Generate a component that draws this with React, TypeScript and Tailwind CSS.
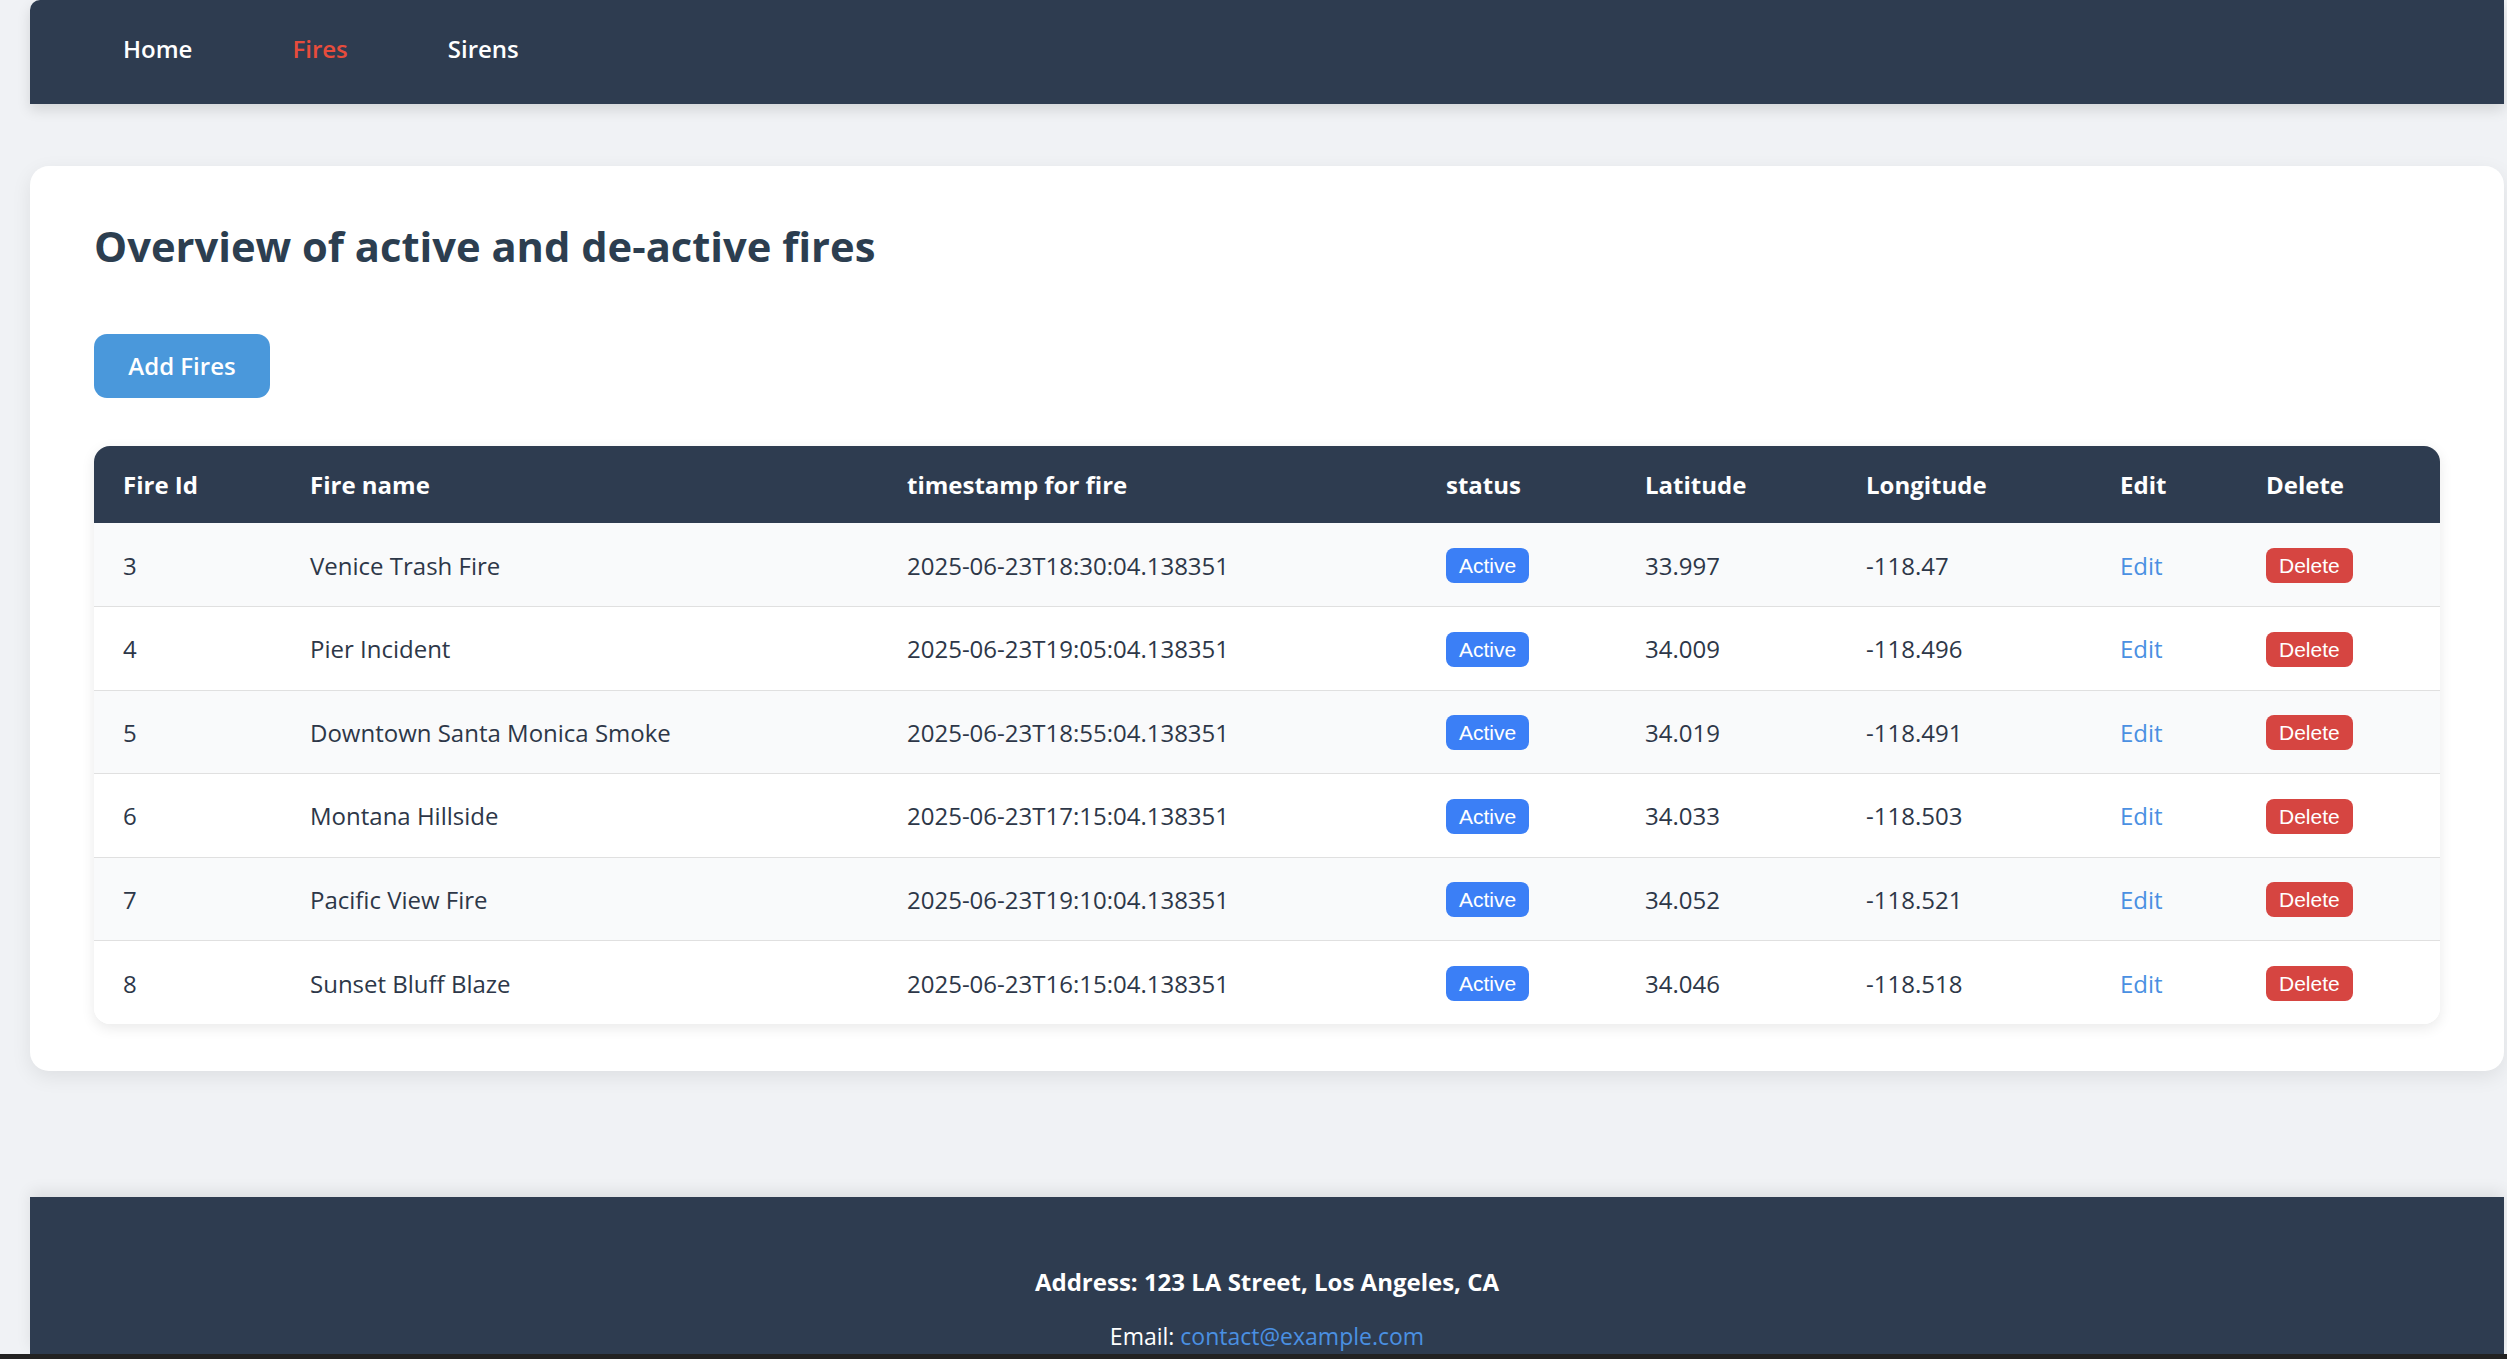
const fires = [
  { id: 3, name: 'Venice Trash Fire', ts: '2025-06-23T18:30:04.138351', lat: '33.997', lng: '-118.47' },
  { id: 4, name: 'Pier Incident', ts: '2025-06-23T19:05:04.138351', lat: '34.009', lng: '-118.496' },
  { id: 5, name: 'Downtown Santa Monica Smoke', ts: '2025-06-23T18:55:04.138351', lat: '34.019', lng: '-118.491' },
  { id: 6, name: 'Montana Hillside', ts: '2025-06-23T17:15:04.138351', lat: '34.033', lng: '-118.503' },
  { id: 7, name: 'Pacific View Fire', ts: '2025-06-23T19:10:04.138351', lat: '34.052', lng: '-118.521' },
  { id: 8, name: 'Sunset Bluff Blaze', ts: '2025-06-23T16:15:04.138351', lat: '34.046', lng: '-118.518' },
];

const headers = [
  { label: 'Fire Id', w: 'w-[187px]' },
  { label: 'Fire name', w: 'w-[597px]' },
  { label: 'timestamp for fire', w: 'w-[539px]' },
  { label: 'status', w: 'w-[199px]' },
  { label: 'Latitude', w: 'w-[221px]' },
  { label: 'Longitude', w: 'w-[254px]' },
  { label: 'Edit', w: 'w-[146px]' },
  { label: 'Delete', w: 'w-[205px]' },
];

function NavBar() {
  return (
    <nav className="h-[104px] bg-[#2e3c50] rounded-tl-[10px] shadow-[0_6px_14px_rgba(0,0,0,0.12)] flex items-center pl-[93px] pb-[6px] gap-[100px] text-[24px] font-semibold">
      <a className="text-white">Home</a>
      <a className="text-[#e74c3c]">Fires</a>
      <a className="text-white">Sirens</a>
    </nav>
  );
}

function FiresTable() {
  return (
    <div className="rounded-2xl shadow-[0_4px_14px_rgba(0,0,0,0.09)] overflow-hidden bg-white">
      <table className="w-full table-fixed border-collapse text-left">
        <thead>
          <tr className="bg-[#2e3c50] text-white h-[77px]">
            {headers.map((h) => (
              <th key={h.label} className={`${h.w} pl-[29px] font-bold text-[24px]`}>
                {h.label}
              </th>
            ))}
          </tr>
        </thead>
        <tbody>
          {fires.map((f, i) => (
            <tr
              key={f.id}
              className={`h-[83.5px] text-[24px] text-[#2d3748] ${i % 2 === 0 ? 'bg-[#f9fafb]' : 'bg-white'} ${i < fires.length - 1 ? 'border-b border-[#e0e0e0]' : ''}`}
            >
              <td className="pl-[29px] pt-[2px]">{f.id}</td>
              <td className="pl-[29px] pt-[2px]">{f.name}</td>
              <td className="pl-[29px] pt-[2px]">{f.ts}</td>
              <td className="pl-[29px]">
                <span className="inline-flex items-center h-[35px] px-[13px] rounded-[8px] bg-[#3b7ff6] text-white text-[21px] font-['Liberation_Sans',Arial,sans-serif]">
                  Active
                </span>
              </td>
              <td className="pl-[29px] pt-[2px]">{f.lat}</td>
              <td className="pl-[29px] pt-[2px]">{f.lng}</td>
              <td className="pl-[29px] pt-[2px]">
                <a className="text-[#4a90e2]">Edit</a>
              </td>
              <td className="pl-[29px]">
                <button className="inline-flex items-center h-[35px] px-[13px] rounded-[8px] bg-[#d64541] text-white text-[21px] font-['Liberation_Sans',Arial,sans-serif]">
                  Delete
                </button>
              </td>
            </tr>
          ))}
        </tbody>
      </table>
    </div>
  );
}

export default function App() {
  return (
    <div className="min-h-[1359px] bg-[#f0f2f5] pl-[30px] pr-[3px] font-['Open_Sans',sans-serif] flex flex-col">
      <NavBar />

      <main className="mt-[62px] bg-white rounded-[19px] shadow-[0_6px_20px_rgba(0,0,0,0.08)] px-[64px] pt-[50px] pb-[47px]">
        <h1 className="text-[41.7px] font-bold text-[#2c3e50] leading-[60px]">
          Overview of active and de-active fires
        </h1>
        <button className="mt-[58px] h-[64px] w-[176px] rounded-[13px] bg-[#4a98db] text-white text-[24px] font-semibold">
          Add Fires
        </button>
        <div className="mt-[48px]">
          <FiresTable />
        </div>
      </main>

      <footer className="mt-[126px] bg-[#2e3c50] h-[157px] flex flex-col items-center pt-[70px] text-white text-[24px] shadow-[0_-6px_14px_rgba(0,0,0,0.08)]">
        <p className="font-bold leading-[30px]">Address: 123 LA Street, Los Angeles, CA</p>
        <p className="mt-[24px] leading-[30px] text-[23px]">
          Email: <a className="text-[#4a90e2]">contact@example.com</a>
        </p>
      </footer>
      <div className="h-[6px] bg-[#222222] -ml-[30px] -mr-[3px]" />
    </div>
  );
}
